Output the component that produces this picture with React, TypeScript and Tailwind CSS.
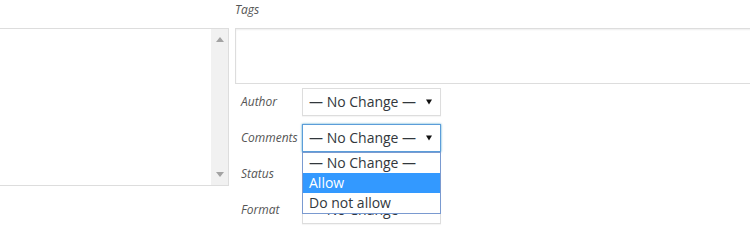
import React from 'react';

const Caret = () => (
  <svg width="6" height="6" viewBox="0 0 6 6" className="shrink-0">
    <polygon points="0,0.5 6,0.5 3,5.5" fill="#111" />
  </svg>
);

const FakeSelect = ({ focused = false }: { focused?: boolean }) => (
  <div
    className={`w-[139px] h-[28px] bg-white flex items-center justify-between pl-[6px] pr-[8px] text-[14px] text-[#32373c] border ${
      focused ? 'border-[#5b9dd9] shadow-[0_0_2px_rgba(30,140,190,0.8)]' : 'border-[#ddd] shadow-[0_1px_1px_rgba(0,0,0,0.04)]'
    }`}
  >
    <span className="leading-none">— No Change —</span>
    <Caret />
  </div>
);

const rows = ['Author', 'Comments', 'Status', 'Format'];
const options = ['— No Change —', 'Allow', 'Do not allow'];

export default function App() {
  return (
    <div className="w-[750px] h-[252px] bg-white overflow-hidden flex font-['Open_Sans',sans-serif]">
      {/* Category checklist */}
      <div className="w-[229px] shrink-0 pt-[28px]">
        <div className="h-[158px] border-y border-r border-[#ddd] flex justify-end">
          <div className="w-[17px] bg-[#f1f1f1] flex flex-col items-center justify-between pt-[8px] pb-[8px]">
            <svg width="8" height="5" viewBox="0 0 8 5">
              <polygon points="0,5 8,5 4,0" fill="#a3a3a3" />
            </svg>
            <svg width="8" height="5" viewBox="0 0 8 5">
              <polygon points="0,0 8,0 4,5" fill="#a3a3a3" />
            </svg>
          </div>
        </div>
      </div>

      <div className="ml-[6px] flex-1 min-w-0">
        <div className="h-[28px] flex items-center text-[12px] italic text-[#555] pb-[8px]">Tags</div>
        <div className="h-[56px] w-[530px] border border-[#ddd] bg-white shadow-[inset_0_1px_2px_rgba(0,0,0,0.07)]" />

        <div className="relative mt-[4px] flex flex-col gap-[8px]">
          {rows.map((label) => (
            <div key={label} className="flex items-center h-[28px]">
              <span className="w-[67px] pl-[6px] text-[12px] italic text-[#555]">{label}</span>
              <FakeSelect focused={label === 'Comments'} />
            </div>
          ))}

          {/* Open dropdown list */}
          <div className="absolute left-[67px] top-[64px] w-[139px] bg-white border border-[#7a9ad0] z-10">
            {options.map((opt) => (
              <div
                key={opt}
                className={`h-[20px] flex items-center pl-[6px] text-[14px] leading-none ${
                  opt === 'Allow' ? 'bg-[#3399ff] text-white' : 'text-[#32373c]'
                }`}
              >
                {opt}
              </div>
            ))}
          </div>
        </div>
      </div>
    </div>
  );
}
